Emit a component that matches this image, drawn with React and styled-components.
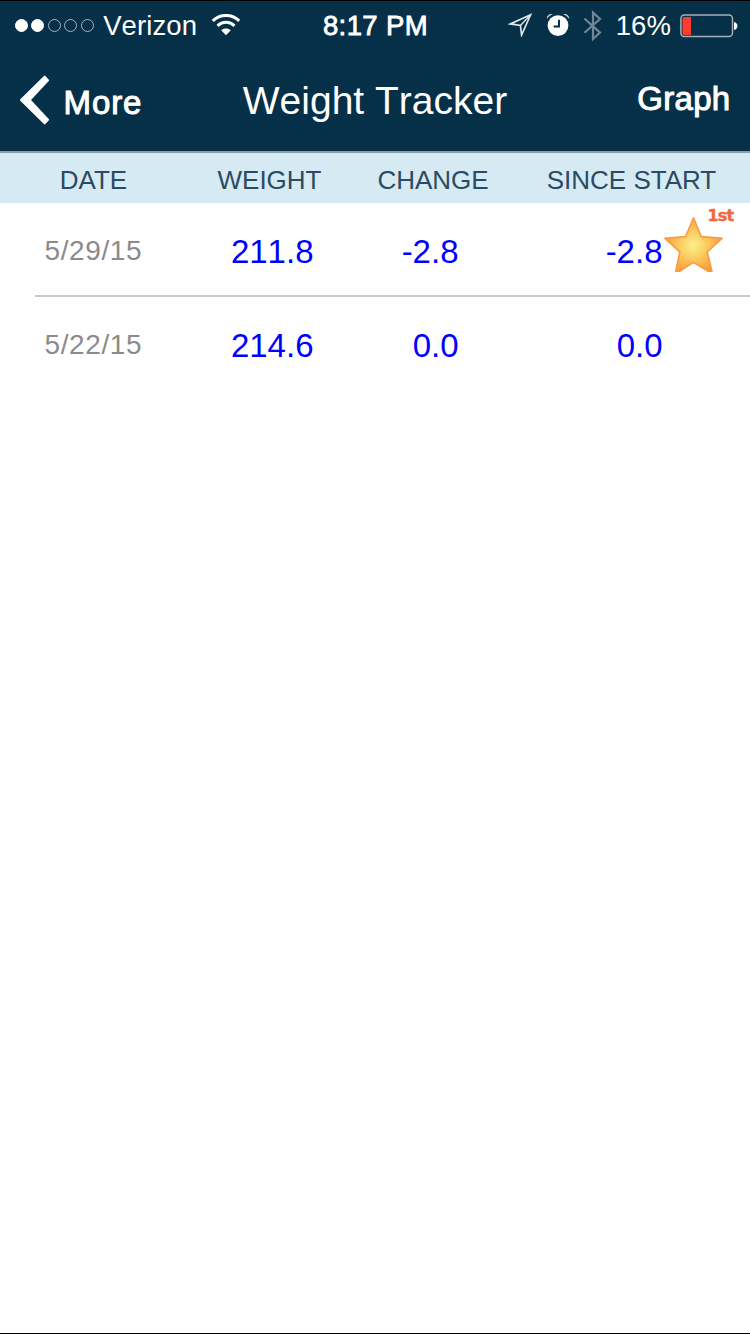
import styled, { createGlobalStyle } from 'styled-components'

const entries = [
    { date: '5/29/15', weight: '211.8', change: '-2.8', total: '-2.8', award: '1st' },
    { date: '5/22/15', weight: '214.6', change: '0.0', total: '0.0' },
]

const signal = [true, true, false, false, false] // FILLED DOTS = SIGNAL STRENGTH

const WifiIcon = () => (
    <svg width='30' height='22' viewBox='0 0 30 22' fill='none' stroke='#fff'>
        <path d='M1.8 6.9C9.2 -0.4 20.8 -0.4 28.2 6.9' strokeWidth='3' />
        <path d='M6.5 11.8C11.4 7.2 18.6 7.2 23.5 11.8' strokeWidth='3' />
        <path d='M15 21.2L10.2 16.3C13 13.9 17 13.9 19.8 16.3Z' fill='#fff' stroke='none' />
    </svg>
)

const LocationIcon = () => (
    <svg width='25' height='24' viewBox='0 0 25 24' fill='none' stroke='#dfe5e9' strokeWidth='1.7'>
        <path d='M22.6 1.8L2.4 10.9L12.4 12.4L13.6 22Z' />
        <path d='M22.6 1.8L12.4 12.4' strokeWidth='1.4' />
    </svg>
)

const AlarmIcon = () => (
    <svg width='24' height='24' viewBox='0 0 24 24' fill='none'>
        <circle cx='12' cy='12.6' r='10.4' fill='#fff' />
        <path d='M0.8 6C0.6 2.8 3.4 0.6 6.8 1.2C4.2 2.2 2.2 3.8 0.8 6Z' fill='#cdd5da' />
        <path d='M23.2 6C23.4 2.8 20.6 0.6 17.2 1.2C19.8 2.2 21.8 3.8 23.2 6Z' fill='#cdd5da' />
        <path d='M13 6.8V13.6H7.6' stroke='#063047' strokeWidth='2' />
    </svg>
)

const BluetoothIcon = () => (
    <svg width='20' height='32' viewBox='0 0 20 32' fill='none' stroke='#6f8796' strokeWidth='2.2'>
        <path d='M1.4 8.5L17 22.6L10 29V2.6L17 9L1.4 22.8' />
    </svg>
)

const BatteryIcon = () => (
    <svg width='58' height='24' viewBox='0 0 58 24'>
        <rect x='0.9' y='1' width='51.6' height='21.6' rx='3.5' fill='none' stroke='#a3b0b9' strokeWidth='1.5' />
        <path d='M2.5 5A2 2 0 0 1 4.5 3H11V21H4.5A2 2 0 0 1 2.5 19Z' fill='#ff3b30' />
        <path d='M54 8C58.5 8.5 58.5 15.5 54 16Z' fill='#fff' />
    </svg>
)

const BackIcon = () => (
    <svg width='31' height='50' viewBox='0 0 31 50' fill='#fff' stroke='#fff' strokeWidth='2' strokeLinejoin='round'>
        <path d='M25.6 1.6L29 5.2L10.6 25L29 44.8L25.6 48.4L2 25Z' />
    </svg>
)

const StarIcon = () => (
    <svg width='61' height='56' viewBox='0 0 61 56'>
        <defs>
            <radialGradient id='gold' gradientUnits='userSpaceOnUse' cx='30' cy='29' r='30'>
                <stop offset='0' stopColor='#fbf08e' />
                <stop offset='0.5' stopColor='#fcc75c' />
                <stop offset='1' stopColor='#fb9a36' />
            </radialGradient>
        </defs>
        <path
            d='M30.5 1.8L38.2 20.6L59.2 22.2L44.2 36L49.6 58L30.5 46.4L12.2 58L16.8 36L1.8 22.2L22.6 20.6Z'
            fill='url(#gold)'
            stroke='#f99a40'
            strokeWidth='1.6'
            strokeLinejoin='round'
        />
    </svg>
)

const App = () => {
    return (
        <>
            <GlobalStyle />
            <ScreenStyled>
                <HeaderStyled>
                    <StatusBar>
                        <Carrier>
                            <Dots>
                                {signal.map((on, i) => <Dot key={i} $on={on} />)}
                            </Dots>
                            <StatusText>Verizon</StatusText>
                            <WifiIcon />
                        </Carrier>
                        <Clock>8:17 PM</Clock>
                        <Indicators>
                            <LocationIcon />
                            <AlarmIcon />
                            <BluetoothIcon />
                            <StatusText>16%</StatusText>
                            <BatteryIcon />
                        </Indicators>
                    </StatusBar>
                    <NavBar>
                        <BackButton>
                            <BackIcon />
                            <span>More</span>
                        </BackButton>
                        <Title>Weight Tracker</Title>
                        <GraphButton>Graph</GraphButton>
                    </NavBar>
                </HeaderStyled>

                <TableHead>
                    <span>DATE</span>
                    <span>WEIGHT</span>
                    <span>CHANGE</span>
                    <span>SINCE START</span>
                </TableHead>

                <List>
                    {entries.map((entry, i) => (
                        <Row key={i} $last={i === entries.length - 1}>
                            <DateCell>{entry.date}</DateCell>
                            <Value>{entry.weight}</Value>
                            <Value>{entry.change}</Value>
                            <Value>{entry.total}</Value>
                            {entry.award && (
                                <Award>
                                    <StarIcon />
                                    <Badge>{entry.award}</Badge>
                                </Award>
                            )}
                        </Row>
                    ))}
                </List>
            </ScreenStyled>
        </>
    )
}

export default App

const GlobalStyle = createGlobalStyle`
    *{
        box-sizing:border-box;
    }

    body{
        margin:0;
        background-color:#fff;
        font-family:'Liberation Sans', Arial, sans-serif;
        font-kerning:none;
    }

    svg{
        display:block;
        flex-shrink:0;
    }
`

const ScreenStyled = styled.div`
    display:flex;
    flex-direction:column;
    width:750px;
    height:1334px;
    border-top:1px solid #000;
    border-bottom:1px solid #000;
    overflow:hidden;
    white-space:nowrap;
`

const HeaderStyled = styled.header`
    height:152px;
    background-color:#063047;
    border-bottom:2px solid #8b9ca6;
    color:#fff;
`

const StatusBar = styled.div`
    display:grid;
    grid-template-columns:300px 150px 300px;
    height:50px;
`

const Carrier = styled.div`
    display:flex;
    align-items:center;
    padding-left:15px;

    svg{
        margin-left:14px;
        margin-bottom:3px;
    }
`

const Dots = styled.div`
    display:flex;
    gap:3.4px;
    margin-right:9.6px;
    margin-bottom:1px;
`

const Dot = styled.i`
    width:13px;
    height:13px;
    border:1px solid ${props => props.$on ? '#fff' : '#a5b3bc'};
    border-radius:50%;
    background-color:${props => props.$on ? '#fff' : 'transparent'};
`

const StatusText = styled.span`
    font-size:27.5px;
    letter-spacing:0.1px;
`

const Clock = styled.div`
    display:flex;
    align-items:center;
    justify-content:center;
    padding-left:1px;
    font-size:27.5px;
    letter-spacing:0.4px;
    -webkit-text-stroke:0.8px #fff;
`

const Indicators = styled.div`
    display:flex;
    align-items:center;
    justify-content:flex-end;
    padding-right:12px;

    svg:nth-child(1){
        margin-right:13px;
        margin-bottom:2px;
    }

    svg:nth-child(2){
        margin-right:13px;
        margin-bottom:2px;
    }

    svg:nth-child(3){
        margin-right:13px;
        margin-bottom:1px;
    }

    svg:last-child{
        margin-left:9px;
        margin-bottom:1px;
    }
`

const NavBar = styled.nav`
    display:grid;
    grid-template-columns:200px 350px 200px;
    height:100px;
    font-size:33px;
`

const BackButton = styled.div`
    display:flex;
    align-items:center;
    padding-left:19px;
    -webkit-text-stroke:1px #fff;

    svg{
        margin-right:13.5px;
        margin-bottom:2px;
    }

    span{
        letter-spacing:0.9px;
        padding-top:3px;
    }
`

const Title = styled.h1`
    margin:0;
    font-size:39px;
    font-weight:400;
    line-height:100px;
    text-align:center;
`

const GraphButton = styled.div`
    line-height:96px;
    padding-right:19.5px;
    text-align:right;
    letter-spacing:0.3px;
    -webkit-text-stroke:1px #fff;
`

const TableHead = styled.div`
    display:grid;
    grid-template-columns:187px 165px 162px 235px;
    height:50px;
    background-color:#d6eaf3;
    color:#2b4a63;
    font-size:26px;
    font-kerning:normal;
    line-height:54px;
    text-align:center;
`

const List = styled.div`
    display:flex;
    flex-direction:column;
    padding-left:35px;
`

const Row = styled.div`
    display:grid;
    grid-template-columns:115px 163.5px 145px 204px 1fr;
    height:94px;
    border-bottom:${props => props.$last ? '0' : '2px solid #c8c7cc'};
    line-height:96px;
`

const DateCell = styled.span`
    padding-left:9.5px;
    color:#8b8b8b;
    font-size:28px;
    letter-spacing:0.6px;
`

const Value = styled.span`
    color:#00f;
    font-size:33px;
    line-height:98px;
    text-align:right;
`

const Award = styled.div`
    position:relative;
    padding-top:13px;
`

// SITS OVER THE TOP RIGHT POINT OF THE STAR
const Badge = styled.span`
    position:absolute;
    top:4px;
    left:45px;
    color:#f5643c;
    font-family:'DejaVu Sans', sans-serif;
    font-size:16px;
    font-weight:700;
    line-height:18px;
    letter-spacing:-0.8px;
    -webkit-text-stroke:0.4px #f5643c;
`
